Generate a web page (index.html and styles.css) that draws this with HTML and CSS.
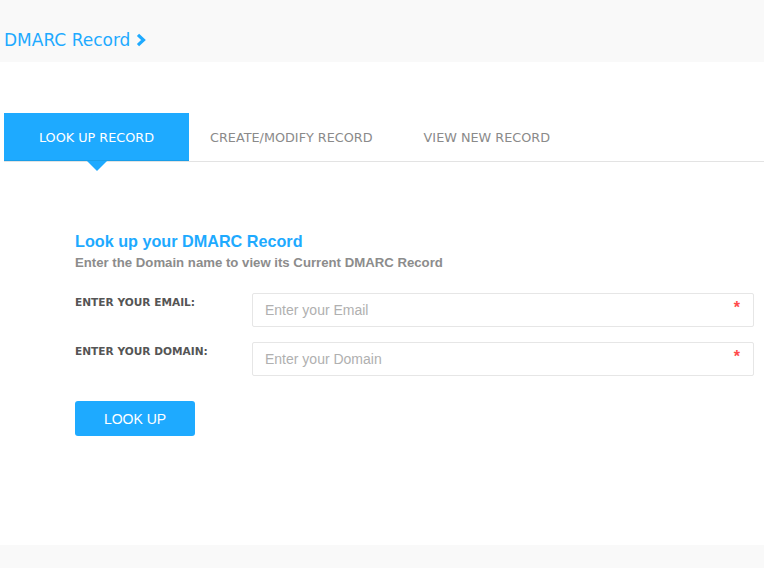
FILE: index.html
```html
<!DOCTYPE html>
<html>

<head>
  <meta charset="utf-8" />
  <title>DMARC Record</title>
  <link rel="stylesheet" href="styles.css">
</head>

<body>
  <div class="topbar">
    <a class="crumb" href="#">DMARC Record
      <svg class="chev" width="10" height="14" viewBox="0 0 10 14">
        <path d="M2 1.8 L7.5 7 L2 12.2" fill="none" stroke="#1eaaff" stroke-width="3.2" />
      </svg>
    </a>
  </div>

  <div class="main">
    <div class="tabs">
      <div class="tab active">LOOK UP RECORD</div>
      <div class="tab">CREATE/MODIFY RECORD</div>
      <div class="tab">VIEW NEW RECORD</div>
    </div>

    <div class="form">
      <h2 class="title">Look up your DMARC Record</h2>
      <p class="sub">Enter the Domain name to view its Current DMARC Record</p>

      <div class="row">
        <label class="label">ENTER YOUR EMAIL:</label>
        <div class="field">
          <input type="text" placeholder="Enter your Email" />
          <span class="req">*</span>
        </div>
      </div>
      <div class="row">
        <label class="label">ENTER YOUR DOMAIN:</label>
        <div class="field">
          <input type="text" placeholder="Enter your Domain" />
          <span class="req">*</span>
        </div>
      </div>

      <button class="btn">LOOK UP</button>
    </div>
  </div>

  <div class="footer"></div>
</body>

</html>
```

FILE: styles.css
```css
body {
  margin: 0;
  padding: 0;
  background-color: white;
  font-family: "DejaVu Sans", sans-serif;
}

.topbar {
  height: 62px;
  background-color: #f9f9f9;
  padding-left: 4px;
  padding-top: 30px;
  box-sizing: border-box;
}

.crumb {
  color: #1eaaff;
  text-decoration: none;
  font-size: 17px;
  line-height: 20px;
  display: flex;
  align-items: center;
  gap: 6px;
}

.main {
  height: 483px;
  padding-top: 51px;
  padding-left: 4px;
  box-sizing: border-box;
}

.tabs {
  display: flex;
  border-bottom: 1px solid #e3e3e3;
  height: 48px;
}

.tab {
  position: relative;
  height: 48px;
  line-height: 49px;
  font-size: 12.8px;
  color: #8a8a8a;
  padding: 0 21px;
}

.tab.active {
  background-color: #1eaaff;
  color: white;
  width: 185px;
  padding: 0;
  text-align: center;
  box-sizing: border-box;
  border-bottom: 1px solid #1a9ee8;
}

.tab.active::after {
  content: "";
  position: absolute;
  left: 83px;
  top: 48px;
  border-left: 10px solid transparent;
  border-right: 10px solid transparent;
  border-top: 10px solid #1eaaff;
}

.tab:nth-child(3) {
  padding-left: 30px;
}

.form {
  padding-left: 71px;
  padding-top: 70px;
}

.title {
  margin: 0;
  font-family: "Liberation Sans", Arial, sans-serif;
  font-weight: bold;
  font-size: 16.2px;
  color: #1eaaff;
}

.sub {
  margin: 4px 0 0;
  font-family: "Liberation Sans", Arial, sans-serif;
  font-weight: bold;
  font-size: 13.2px;
  color: #8c8c8c;
}

.row {
  display: flex;
  margin-top: 23px;
}

.row + .row {
  margin-top: 15px;
}

.label {
  width: 177px;
  font-size: 10.6px;
  font-weight: bold;
  color: #555;
  padding-top: 3px;
}

.field {
  position: relative;
  width: 502px;
}

.field input {
  width: 100%;
  height: 34px;
  box-sizing: border-box;
  border: 1px solid #e6e6e6;
  border-radius: 2px;
  padding: 0 12px;
  font-family: "Liberation Sans", Arial, sans-serif;
  font-size: 14px;
  outline: none;
}

.field input::placeholder {
  color: #b0b0b0;
}

.req {
  position: absolute;
  right: 14px;
  top: 6px;
  color: #ff4b4b;
  font-family: "Liberation Sans", Arial, sans-serif;
  font-weight: bold;
  font-size: 16px;
}

.btn {
  margin-top: 25px;
  width: 120px;
  height: 35px;
  background-color: #1eaaff;
  color: white;
  border: 0;
  border-radius: 3px;
  font-family: "Liberation Sans", Arial, sans-serif;
  font-size: 14px;
  cursor: pointer;
}

.footer {
  height: 23px;
  background-color: #f9f9f9;
}
```
